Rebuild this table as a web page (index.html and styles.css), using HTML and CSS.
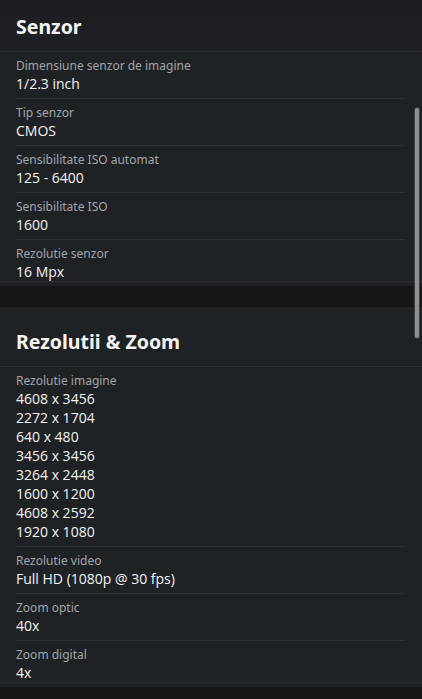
FILE: index.html
```html
<!DOCTYPE html>
<html lang="ro">
<head>
<meta charset="utf-8">
<title>Specificatii</title>
<link rel="stylesheet" href="styles.css">
</head>
<body>
<main class="page">
  <section class="card card-first">
    <h2 class="card-title">Senzor</h2>
    <div class="rows">
      <div class="row"><div class="label">Dimensiune senzor de imagine</div><div class="value">1/2.3 inch</div></div>
      <div class="row"><div class="label">Tip senzor</div><div class="value">CMOS</div></div>
      <div class="row"><div class="label">Sensibilitate ISO automat</div><div class="value">125 - 6400</div></div>
      <div class="row"><div class="label">Sensibilitate ISO</div><div class="value">1600</div></div>
      <div class="row"><div class="label">Rezolutie senzor</div><div class="value">16 Mpx</div></div>
    </div>
  </section>
  <section class="card">
    <h2 class="card-title">Rezolutii &amp; Zoom</h2>
    <div class="rows">
      <div class="row"><div class="label">Rezolutie imagine</div>
        <div class="value">4608 x 3456</div>
        <div class="value">2272 x 1704</div>
        <div class="value">640 x 480</div>
        <div class="value">3456 x 3456</div>
        <div class="value">3264 x 2448</div>
        <div class="value">1600 x 1200</div>
        <div class="value">4608 x 2592</div>
        <div class="value">1920 x 1080</div>
      </div>
      <div class="row"><div class="label">Rezolutie video</div><div class="value">Full HD (1080p @ 30 fps)</div></div>
      <div class="row"><div class="label">Zoom optic</div><div class="value">40x</div></div>
      <div class="row"><div class="label">Zoom digital</div><div class="value">4x</div></div>
    </div>
  </section>
</main>
<div class="scrollbar"></div>
</body>
</html>
```
FILE: styles.css
```css
* { box-sizing: border-box; }
html, body {
  margin: 0;
  padding: 0;
  height: 100%;
  overflow: hidden;
  background: #141618;
}
body {
  font-family: "Noto Sans", "Open Sans", sans-serif;
  color: #f1f1f1;
}
.page {
  display: flex;
  flex-direction: column;
  gap: 21px;
}
.card {
  background: #1f2225;
  padding-top: 8px;
  padding-bottom: 4px;
}
.card-first {
  padding-top: 0;
  background: linear-gradient(#1b1d20 0, #1f2225 60px);
}
.card-title {
  margin: 0;
  padding: 13px 16px 10px;
  font-size: 19.5px;
  line-height: 28px;
  font-weight: 700;
  color: #f4f4f4;
  border-bottom: 1px solid #2b2e32;
}
.rows {
  border-bottom: 1px solid #2a2d31;
}
.row {
  margin: 0 17px 0 16px;
  padding: 5px 0 5px;
  border-bottom: 1px solid #2d3034;
}
.row:last-child {
  border-bottom: none;
  padding-bottom: 0;
}
.label {
  font-size: 12px;
  line-height: 17px;
  color: #a0a4a8;
}
.value {
  font-family: "Open Sans", "Noto Sans", sans-serif;
  font-size: 14px;
  line-height: 19px;
  font-weight: 500;
  color: #f3f3f3;
}
.scrollbar {
  position: absolute;
  left: 415px;
  top: 108px;
  width: 4px;
  height: 230px;
  border-radius: 2px;
  background: #8e9194;
  box-shadow: 0 0 0 1px #3a3d40;
}
```
